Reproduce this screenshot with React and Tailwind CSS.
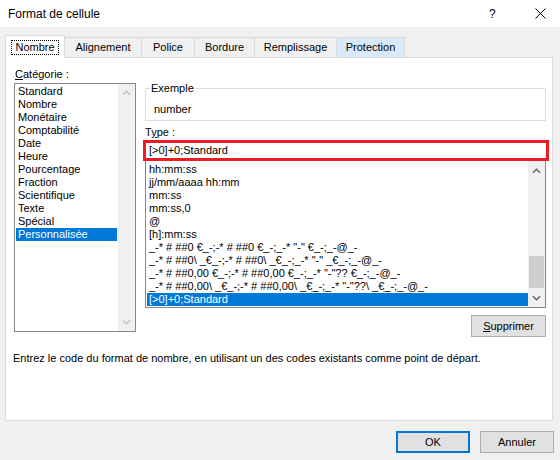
import React from "react";

const categories = [
  "Standard",
  "Nombre",
  "Monétaire",
  "Comptabilité",
  "Date",
  "Heure",
  "Pourcentage",
  "Fraction",
  "Scientifique",
  "Texte",
  "Spécial",
  "Personnalisée",
];

const formats = [
  "hh:mm:ss",
  "jj/mm/aaaa hh:mm",
  "mm:ss",
  "mm:ss,0",
  "@",
  "[h]:mm:ss",
  '_-* # ##0 €_-;-* # ##0 €_-;_-* "-" €_-;_-@_-',
  '_-* # ##0\\ _€_-;-* # ##0\\ _€_-;_-* "-" _€_-;_-@_-',
  '_-* # ##0,00 €_-;-* # ##0,00 €_-;_-* "-"?? €_-;_-@_-',
  '_-* # ##0,00\\ _€_-;-* # ##0,00\\ _€_-;_-* "-"??\\ _€_-;_-@_-',
  "[>0]+0;Standard",
];

function Chevron({ down, color }) {
  return (
    <svg width="9" height="6" viewBox="0 0 9 6">
      <path
        d={down ? "M1 1.2 L4.5 4.7 L8 1.2" : "M1 4.8 L4.5 1.3 L8 4.8"}
        fill="none"
        stroke={color}
        strokeWidth="1.4"
      />
    </svg>
  );
}

function Tab({ label, width, active }) {
  return (
    <div
      className={`flex items-center justify-center border-t border-r border-[#d9d9d9] h-[20px] ${width} ${
        active ? "bg-[#d8eaf9] border-[#c4dcf2]" : "bg-[#f0f0f0]"
      }`}
    >
      {label}
    </div>
  );
}

export default function App() {
  return (
    <div
      className="w-[560px] h-[460px] overflow-hidden bg-[#f0f0f0] text-[11px] text-black"
      style={{ fontFamily: '"Liberation Sans", Arial, sans-serif' }}
    >
      {/* title bar */}
      <div className="flex h-[27px] items-center bg-white pl-[8px] text-[12px]">
        <span className="flex-1">Format de cellule</span>
        <span className="w-[6px] text-[12px] leading-none">?</span>
        <svg className="ml-[40px] mr-[14px]" width="11" height="11" viewBox="0 0 11 11">
          <path d="M0.5 0.5 L10.5 10.5 M10.5 0.5 L0.5 10.5" stroke="#000" strokeWidth="1" />
        </svg>
      </div>

      {/* tabs */}
      <div className="flex h-[30px] items-end pl-[5px] pt-[8px]">
        <div className="relative z-10 -mb-px flex h-[23px] w-[60px] items-start justify-center border-x border-t border-[#d9d9d9] bg-white pt-[4px]">
          <span className="border border-dotted border-black px-[3px] leading-[13px]">Nombre</span>
        </div>
        <Tab label="Alignement" width="w-[77px]" />
        <Tab label="Police" width="w-[53px]" />
        <Tab label="Bordure" width="w-[60px]" />
        <Tab label="Remplissage" width="w-[82px]" />
        <Tab label="Protection" width="w-[68px]" active />
      </div>

      {/* panel */}
      <div className="mx-[5px] flex h-[364px] w-[548px] flex-col border border-[#d9d9d9] bg-white">
        <div className="flex pl-[8px]">
          {/* category */}
          <div className="flex w-[122px] flex-col pt-[8px]">
            <div className="h-[17px] pl-px leading-[17px]">
              <span className="underline">C</span>atégorie :
            </div>
            <div className="flex h-[249px] border border-[#828790]">
              <div className="flex-1 p-px">
                {categories.map((c) => (
                  <div
                    key={c}
                    className={`h-[13px] pl-[2px] leading-[13px] ${
                      c === "Personnalisée" ? "bg-[#0078d7] text-white" : ""
                    }`}
                  >
                    {c}
                  </div>
                ))}
              </div>
              <div className="flex w-[17px] flex-col justify-between bg-[#f0f0f0] py-[6px]">
                <div className="flex justify-center">
                  <Chevron color="#c2c2c2" />
                </div>
                <div className="flex justify-center">
                  <Chevron down color="#c2c2c2" />
                </div>
              </div>
            </div>
          </div>

          {/* type */}
          <div className="ml-[7px] flex w-[406px] flex-col">
            <div className="relative ml-[2px] mt-[30px] h-[33px] w-[401px] border border-[#dcdcdc]">
              <span className="absolute -top-[8px] left-[4px] bg-white px-px leading-[14px]">Exemple</span>
              <div className="pl-[8px] pt-[13px] leading-[14px]">number</div>
            </div>
            <div className="mt-[3px] h-[16px] pl-[2px] leading-[16px]">
              T<span className="underline">y</span>pe :
            </div>
            <div className="h-[21px] border-[3px] border-[#ed1c24] pl-[3px] leading-[15px]">[&gt;0]+0;Standard</div>
            <div className="ml-[2px] flex h-[147px] w-[401px] border-x border-b border-[#828790]">
              <div className="flex-1 overflow-hidden pl-px pt-[2px]">
                {formats.map((f, i) => (
                  <div
                    key={i}
                    className={`h-[13px] whitespace-pre pl-[2px] leading-[13px] ${
                      i === formats.length - 1 ? "bg-[#0078d7] text-white" : ""
                    }`}
                  >
                    {f}
                  </div>
                ))}
              </div>
              <div className="flex w-[17px] flex-col bg-[#f0f0f0]">
                <div className="flex h-[20px] items-center justify-center">
                  <Chevron color="#606060" />
                </div>
                <div className="flex-1">
                  <div className="mx-[1px] mt-[76px] h-[32px] bg-[#cdcdcd]" />
                </div>
                <div className="flex h-[20px] items-center justify-center">
                  <Chevron down color="#606060" />
                </div>
              </div>
            </div>
            <button className="mr-[3px] mt-[7px] h-[22px] w-[75px] self-end border border-[#adadad] bg-[#e1e1e1]">
              <span className="underline">S</span>upprimer
            </button>
          </div>
        </div>
        <div className="mt-[13px] pl-[7px] leading-[16px]">
          Entrez le code du format de nombre, en utilisant un des codes existants comme point de départ.
        </div>
      </div>

      {/* footer buttons */}
      <div className="mt-[10px] flex justify-end gap-[10px] pr-[6px]">
        <button className="h-[22px] w-[74px] border-2 border-[#0078d7] bg-[#e1e1e1]">OK</button>
        <button className="h-[22px] w-[74px] border border-[#adadad] bg-[#e1e1e1]">Annuler</button>
      </div>
    </div>
  );
}
